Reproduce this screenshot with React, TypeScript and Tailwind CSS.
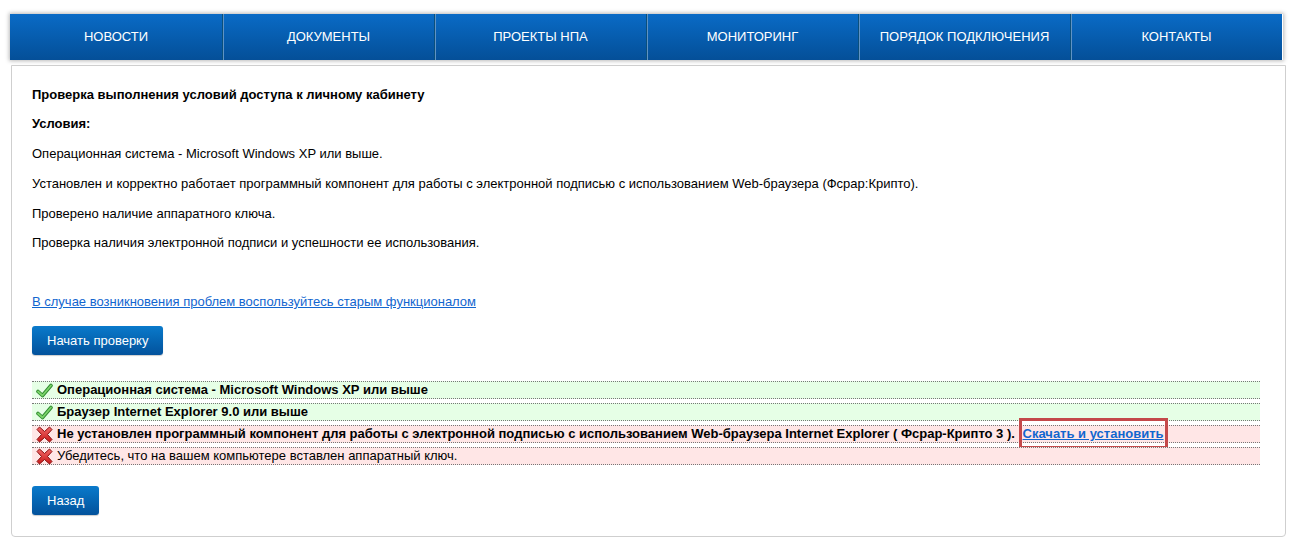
import React from "react";

const navItems = [
  "НОВОСТИ",
  "ДОКУМЕНТЫ",
  "ПРОЕКТЫ НПА",
  "МОНИТОРИНГ",
  "ПОРЯДОК ПОДКЛЮЧЕНИЯ",
  "КОНТАКТЫ",
];

function CheckIcon() {
  return (
    <svg width="17" height="15" viewBox="0 0 17 15" className="shrink-0">
      <path d="M2 8.5 L6.5 12.5 L15 2.5" fill="none" stroke="#2f8a2f" strokeWidth="3.6" strokeLinecap="round" strokeLinejoin="round" />
      <path d="M2 8.5 L6.5 12.5 L15 2.5" fill="none" stroke="#7cd46b" strokeWidth="1.8" strokeLinecap="round" strokeLinejoin="round" />
    </svg>
  );
}

function CrossIcon() {
  return (
    <svg width="17" height="17" viewBox="0 0 17 17" className="shrink-0">
      <defs>
        <linearGradient id="xr" x1="0" y1="0" x2="0" y2="1">
          <stop offset="0" stopColor="#f26b6b" />
          <stop offset="1" stopColor="#c81818" />
        </linearGradient>
      </defs>
      <path
        d="M3.5 1 L8.5 5.5 L13.5 1 L16 3.5 L11.5 8.5 L16 13.5 L13.5 16 L8.5 11.5 L3.5 16 L1 13.5 L5.5 8.5 L1 3.5 Z"
        fill="url(#xr)"
        stroke="#8a1010"
        strokeWidth="1"
        strokeLinejoin="round"
      />
    </svg>
  );
}

function BlueButton({ children }: { children: React.ReactNode }) {
  return (
    <button className="h-[29px] px-[15px] rounded-[3px] bg-gradient-to-b from-[#0a7acb] to-[#03529c] text-white text-[13px] leading-none shadow-[0_1px_1px_rgba(0,0,0,0.2)]">
      {children}
    </button>
  );
}

export default function App() {
  return (
    <div className="min-h-[547px] bg-white font-['Liberation_Sans',Arial,sans-serif] text-[13px] text-black pt-[14px]">
      <nav className="ml-[10px] w-[1273px] flex shadow-[0_0_4px_1px_rgba(0,0,0,0.28)]">
        {navItems.map((item, i) => (
          <div
            key={item}
            className={
              "w-[212px] h-[46px] flex items-center justify-center bg-gradient-to-b from-[#0a6bc6] to-[#044f98] text-white text-[13px] " +
              (i > 0 ? "border-l border-l-[#0a4f7c] shadow-[inset_1px_0_0_#5f93c4]" : "")
            }
          >
            {item}
          </div>
        ))}
      </nav>

      <div className="ml-[11px] mt-[5px] w-[1275px] border border-[#cfcfcf] rounded-b-[4px] pt-[20px] pb-[21px] pl-[20px] pr-[25px]">
        <p className="font-bold leading-[18px] mb-[11px]">Проверка выполнения условий доступа к личному кабинету</p>
        <p className="font-bold leading-[18px] mb-[12px]">Условия:</p>
        <p className="leading-[18px] mb-[12px]">Операционная система - Microsoft Windows XP или выше.</p>
        <p className="leading-[18px] mb-[12px]">
          Установлен и корректно работает программный компонент для работы с электронной подписью с использованием Web-браузера (Фсрар:Крипто).
        </p>
        <p className="leading-[18px] mb-[11px]">Проверено наличие аппаратного ключа.</p>
        <p className="leading-[18px] mb-[41px]">Проверка наличия электронной подписи и успешности ее использования.</p>
        <p className="leading-[18px] mb-[15px]">
          <a href="#" className="text-[#1266cf] underline">В случае возникновения проблем воспользуйтесь старым функционалом</a>
        </p>
        <BlueButton>Начать проверку</BlueButton>

        <div className="mt-[26px] flex flex-col gap-[4px]">
          <div className="h-[18px] flex items-center gap-[4px] pl-[4px] bg-[#e6ffe6] border-y border-dotted border-[#777] font-bold">
            <CheckIcon />
            <span>Операционная система - Microsoft Windows XP или выше</span>
          </div>
          <div className="h-[18px] flex items-center gap-[4px] pl-[4px] bg-[#e6ffe6] border-y border-dotted border-[#777] font-bold">
            <CheckIcon />
            <span>Браузер Internet Explorer 9.0 или выше</span>
          </div>
          <div className="h-[18px] flex items-center gap-[4px] pl-[4px] bg-[#ffe6e6] border-y border-dotted border-[#777] font-bold">
            <CrossIcon />
            <span>
              Не установлен программный компонент для работы с электронной подписью с использованием Web-браузера Internet Explorer ( Фсрар-Крипто 3 ).{" "}
              <span className="border-[3px] border-[#c4494a] px-[1px] py-[5px]">
                <a href="#" className="text-[#1266cf] underline">Скачать и установить</a>
              </span>
            </span>
          </div>
          <div className="h-[18px] flex items-center gap-[4px] pl-[4px] bg-[#ffe6e6] border-y border-dotted border-[#777]">
            <CrossIcon />
            <span>Убедитесь, что на вашем компьютере вставлен аппаратный ключ.</span>
          </div>
        </div>

        <div className="mt-[21px]">
          <BlueButton>Назад</BlueButton>
        </div>
      </div>
    </div>
  );
}
